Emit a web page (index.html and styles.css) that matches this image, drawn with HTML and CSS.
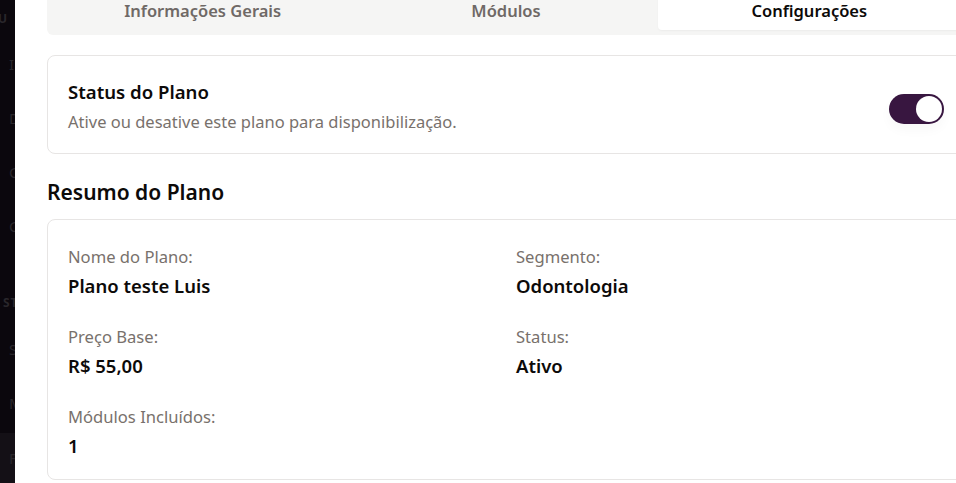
FILE: index.html
```html
<!DOCTYPE html>
<html lang="pt-BR">
<head>
<meta charset="utf-8">
<title>Plano</title>
<link rel="stylesheet" href="styles.css">
</head>
<body>
<aside class="sidebar">
  <div class="side-top">
    <div class="side-brand">U P</div>
    <div class="side-item">Informações</div>
    <div class="side-item">Dashboard</div>
    <div class="side-item">Clientes</div>
    <div class="side-item">Cadastros</div>
    <div class="side-section">STATUS</div>
    <div class="side-item">Sistema</div>
    <div class="side-item">Módulos</div>
  </div>
  <div class="side-bottom">
    <div class="side-item">Financeiro</div>
  </div>
</aside>
<main class="main">
  <div class="content">
    <div class="tabs">
      <div class="tab">Informações Gerais</div>
      <div class="tab">Módulos</div>
      <div class="tab active">Configurações</div>
    </div>

    <section class="card status-card">
      <div class="status-text">
        <h3 class="card-title">Status do Plano</h3>
        <p class="card-sub">Ative ou desative este plano para disponibilização.</p>
      </div>
      <div class="switch" role="switch" aria-checked="true"><span class="knob"></span></div>
    </section>

    <h2 class="section-title">Resumo do Plano</h2>

    <section class="card summary">
      <div class="field">
        <div class="label">Nome do Plano:</div>
        <div class="value">Plano teste Luis</div>
      </div>
      <div class="field">
        <div class="label">Segmento:</div>
        <div class="value">Odontologia</div>
      </div>
      <div class="field">
        <div class="label">Preço Base:</div>
        <div class="value">R$ 55,00</div>
      </div>
      <div class="field">
        <div class="label">Status:</div>
        <div class="value">Ativo</div>
      </div>
      <div class="field">
        <div class="label">Módulos Incluídos:</div>
        <div class="value">1</div>
      </div>
    </section>
  </div>
</main>
</body>
</html>
```

FILE: styles.css
```css
* { box-sizing: border-box; }
html, body { margin: 0; padding: 0; }
body {
  width: 956px;
  height: 483px;
  overflow: hidden;
  display: flex;
  font-family: "Noto Sans", "Open Sans", sans-serif;
  color: #0c0a09;
  background: #ffffff;
}

.sidebar {
  width: 15px;
  flex: none;
  background: #0b070d;
  overflow: hidden;
  display: flex;
  flex-direction: column;
  justify-content: space-between;
  color: #29262b;
  white-space: nowrap;
}
.side-top { display: flex; flex-direction: column; }
.side-brand {
  height: 37px;
  display: flex;
  align-items: center;
  font-size: 12px;
  font-weight: 700;
  letter-spacing: 4px;
  margin-left: -2px;
}
.side-item {
  height: 54px;
  display: flex;
  align-items: center;
  font-size: 15px;
  padding-left: 9px;
}
.side-section {
  height: 69px;
  display: flex;
  align-items: flex-end;
  padding-bottom: 11px;
  padding-left: 3px;
  font-size: 12px;
  font-weight: 700;
  letter-spacing: 1px;
}
.side-bottom { background: #141016; height: 50px; }
.side-bottom .side-item { height: 50px; }

.main {
  flex: none;
  width: 941px;
  padding-left: 32px;
}
.content {
  width: 918px;
  display: flex;
  flex-direction: column;
}

.tabs {
  margin-top: -14px;
  height: 49px;
  background: #f5f5f4;
  border-radius: 6px;
  padding: 5px 4px;
  display: grid;
  grid-template-columns: repeat(3, 1fr);
}
.tab {
  display: flex;
  align-items: center;
  justify-content: center;
  font-size: 16.5px;
  font-weight: 600;
  color: #6f6966;
  border-radius: 4px;
}
.tab.active {
  background: #ffffff;
  color: #0c0a09;
  box-shadow: 0 1px 2px rgba(0,0,0,0.04);
}

.card {
  border: 1px solid #e7e5e4;
  border-radius: 8px;
  background: #fff;
}

.status-card {
  margin-top: 20px;
  height: 99px;
  padding: 22px 20px 0;
  display: flex;
  align-items: flex-start;
  justify-content: space-between;
}
.card-title { margin: 0; font-size: 18.6px; font-weight: 600; line-height: 28px; }
.card-sub { margin: 4px 0 0; font-size: 16.5px; line-height: 24px; color: #78716c; }

.switch {
  width: 55px;
  height: 30px;
  border-radius: 15px;
  background: #381640;
  padding: 2px;
  display: flex;
  justify-content: flex-end;
  align-items: center;
  margin-top: 16px;
  box-shadow: 0 6px 12px rgba(0,0,0,0.03);
}
.knob {
  width: 26px;
  height: 26px;
  border-radius: 50%;
  background: #ffffff;
}

.section-title {
  margin: 23px 0 0;
  font-size: 21px;
  font-weight: 600;
  line-height: 30px;
}

.summary {
  margin-top: 12px;
  padding: 25px 20px 20px;
  display: grid;
  grid-template-columns: 1fr 1fr;
  column-gap: 20px;
  row-gap: 26px;
}
.label { font-size: 16.6px; line-height: 24px; color: #78716c; }
.value { margin-top: 4px; font-size: 18.5px; line-height: 26px; font-weight: 600; }
```
